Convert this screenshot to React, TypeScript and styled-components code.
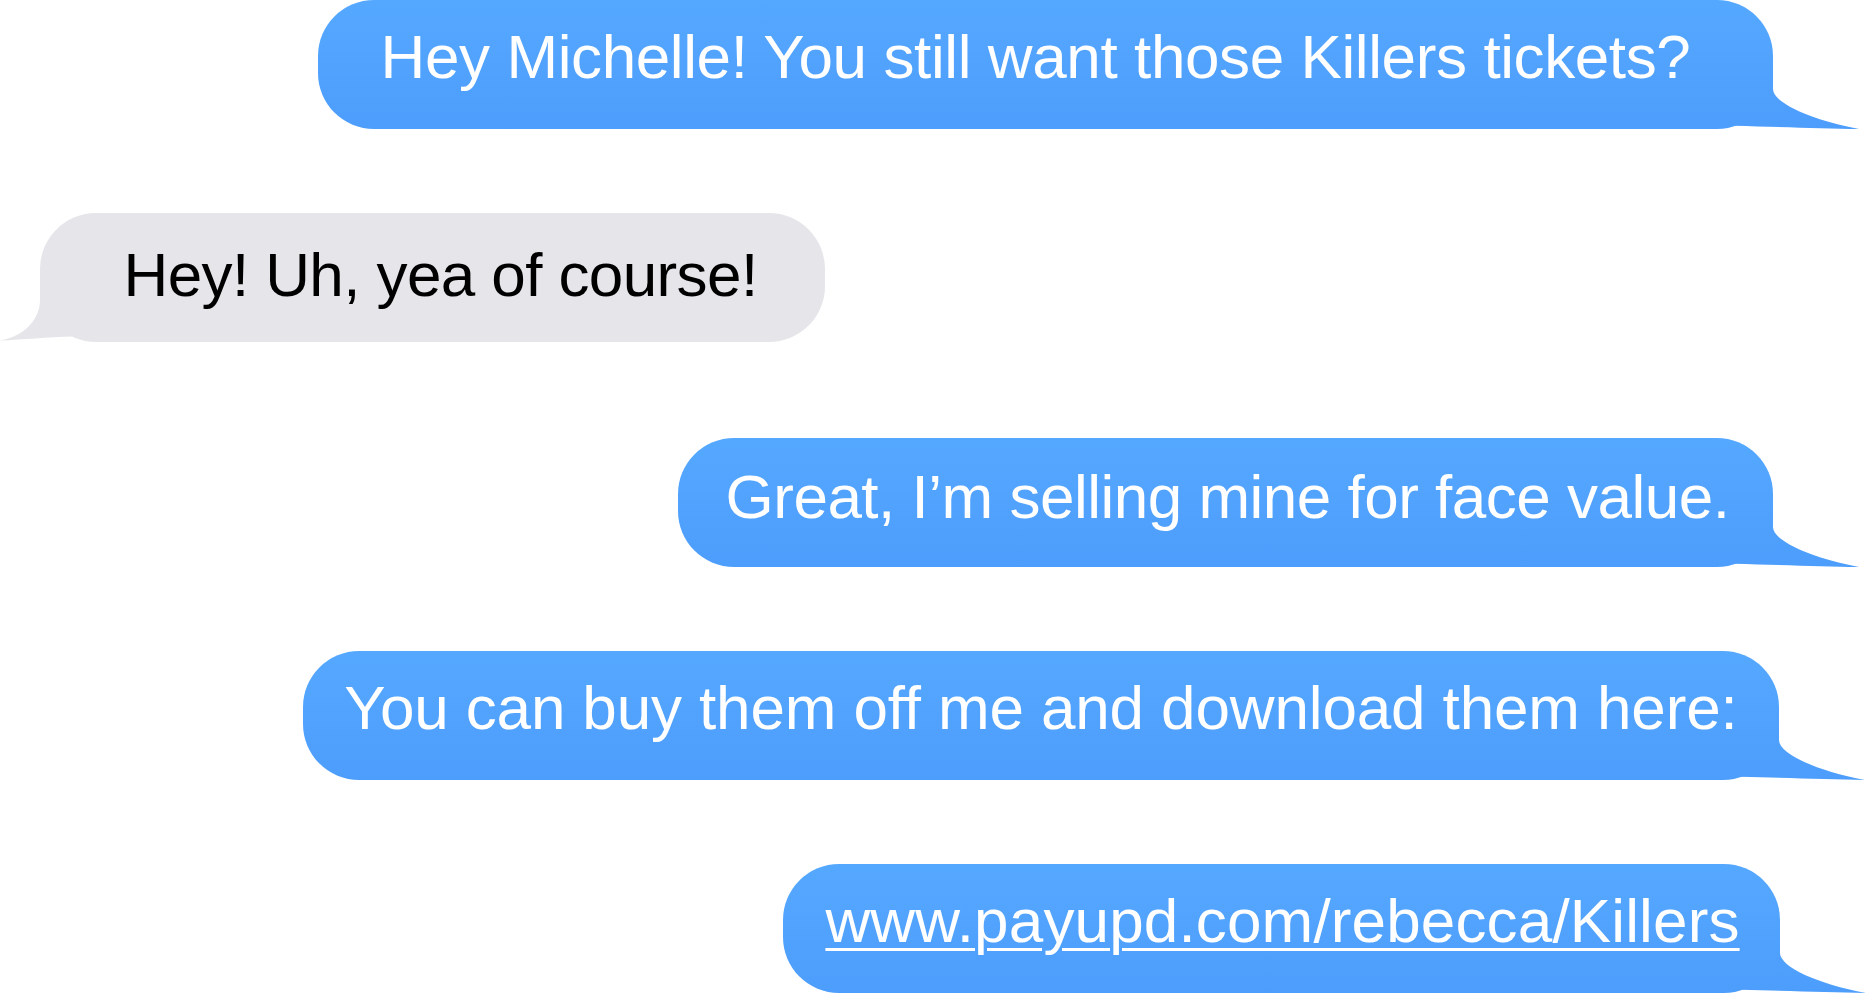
import React from "react";
import styled, { createGlobalStyle } from "styled-components";

const GlobalStyle = createGlobalStyle`
  html, body {
    margin: 0;
    padding: 0;
    background: #ffffff;
    overflow: hidden;
  }
  body {
    font-family: "Liberation Sans", Arial, Helvetica, sans-serif;
  }
`;

const Thread = styled.div`
  width: 1866px;
  height: 993px;
  display: flex;
  flex-direction: column;
  overflow: hidden;
`;

const Row = styled.div<{ $side: "sent" | "received"; $top: number; $edge: number }>`
  display: flex;
  justify-content: ${(p) => (p.$side === "sent" ? "flex-end" : "flex-start")};
  margin-top: ${(p) => p.$top}px;
  padding-right: ${(p) => (p.$side === "sent" ? p.$edge : 0)}px;
  padding-left: ${(p) => (p.$side === "received" ? p.$edge : 0)}px;
`;

const Bubble = styled.div<{ $side: "sent" | "received"; $width: number }>`
  position: relative;
  box-sizing: border-box;
  width: ${(p) => p.$width}px;
  height: 129px;
  border-radius: 56px;
  display: flex;
  align-items: center;
  justify-content: center;
  padding-bottom: 17px;
  background: ${(p) =>
    p.$side === "sent"
      ? "linear-gradient(180deg, #55a8ff 0%, #4d9dfc 100%)"
      : "#e5e5ea"};
  color: ${(p) => (p.$side === "sent" ? "#ffffff" : "#000000")};
`;

const Text = styled.span<{ $tracking: number; $shift: number; $drop: number }>`
  font-family: "Liberation Sans", Arial, Helvetica, sans-serif;
  font-size: 62px;
  line-height: 62px;
  letter-spacing: ${(p) => p.$tracking}px;
  white-space: nowrap;
  position: relative;
  left: ${(p) => p.$shift}px;
  top: ${(p) => p.$drop}px;
  z-index: 1;
`;

const Link = styled.span`
  text-decoration: underline;
  text-decoration-thickness: 3px;
  text-underline-offset: 6px;
`;

const TailSvg = styled.svg<{ $side: "sent" | "received" }>`
  position: absolute;
  bottom: 0;
  width: 146px;
  height: 60px;
  overflow: visible;
  ${(p) =>
    p.$side === "sent"
      ? "right: -86px;"
      : "left: -86px; transform: scaleX(-1);"}
`;

let gid = 0;

const Tail: React.FC<{ side: "sent" | "received" }> = ({ side }) => {
  const id = React.useMemo(() => `tailgrad${gid++}`, []);
  if (side === "sent") {
    return (
      <TailSvg $side="sent" viewBox="-60 -60 146 60">
        <defs>
          <linearGradient id={id} gradientUnits="userSpaceOnUse" x1="0" y1="-129" x2="0" y2="0">
            <stop offset="0" stopColor="#55a8ff" />
            <stop offset="1" stopColor="#4d9dfc" />
          </linearGradient>
        </defs>
        <path
          d="M -40 -60 L 0 -60 L 0 -40 C 0 -26, 38 -9, 86 0 C 50 -0.6, 10 -2, -39 -3.3 L -40 -60 Z"
          fill={`url(#${id})`}
        />
      </TailSvg>
    );
  }
  return (
    <TailSvg $side="received" viewBox="-60 -60 146 60">
      <path
        d="M -40 -60 L 0 -60 L 0 -42 C 0 -24, 14 -6, 40 -1.5 C 18 -2.5, -8 -5, -32 -5.6 L -40 -60 Z"
        fill="#e5e5ea"
      />
    </TailSvg>
  );
};

type Msg = {
  side: "sent" | "received";
  top: number;
  edge: number;
  width: number;
  tracking: number;
  shift: number;
  drop: number;
  content: React.ReactNode;
};

const messages: Msg[] = [
  { side: "sent", top: 0, edge: 93, width: 1455, tracking: -0.4, shift: -10, drop: 1, content: "Hey Michelle! You still want those Killers tickets?" },
  { side: "received", top: 84, edge: 40, width: 785, tracking: -0.6, shift: 8, drop: 6, content: "Hey! Uh, yea of course!" },
  { side: "sent", top: 96, edge: 93, width: 1095, tracking: -0.5, shift: 2, drop: 3, content: "Great, I\u2019m selling mine for face value." },
  { side: "sent", top: 84, edge: 87, width: 1476, tracking: -0.13, shift: 0, drop: 1, content: "You can buy them off me and download them here:" },
  { side: "sent", top: 84, edge: 86, width: 997, tracking: 0.15, shift: 1, drop: 1, content: <Link>www.payupd.com/rebecca/Killers</Link> },
];

export default function App() {
  return (
    <>
      <GlobalStyle />
      <Thread>
        {messages.map((m, i) => (
          <Row key={i} $side={m.side} $top={m.top} $edge={m.edge}>
            <Bubble $side={m.side} $width={m.width}>
              <Tail side={m.side} />
              <Text $tracking={m.tracking} $shift={m.shift} $drop={m.drop}>
                {m.content}
              </Text>
            </Bubble>
          </Row>
        ))}
      </Thread>
    </>
  );
}
